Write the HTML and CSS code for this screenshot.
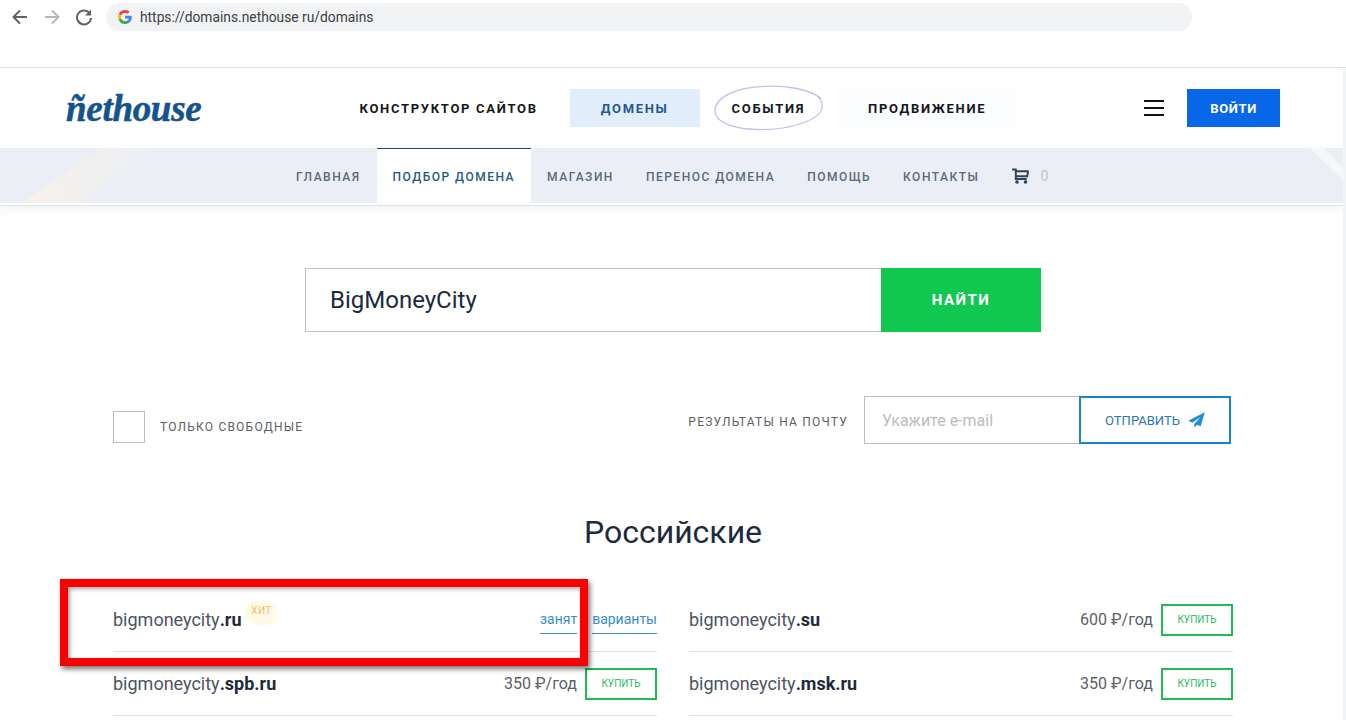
FILE: index.html
```html
<!DOCTYPE html>
<html lang="ru">
<head>
<meta charset="utf-8">
<title>Nethouse Домены</title>
<link rel="stylesheet" href="styles.css">
</head>
<body>
<div class="chrome">
  <svg class="cicon" width="18" height="18" viewBox="0 0 18 18"><path d="M16 9H3M9 2.500 2.500 9 9 15.500" fill="none" stroke="#5f6368" stroke-width="2"/></svg>
  <svg class="cicon" width="18" height="18" viewBox="0 0 18 18"><path d="M2 9h13M9 2.500 15.500 9 9 15.500" fill="none" stroke="#b4b7bb" stroke-width="2"/></svg>
  <svg class="cicon" width="18" height="18" viewBox="0 0 18 18"><path d="M14.600 5.200A7 7 0 1 0 16 10" fill="none" stroke="#5f6368" stroke-width="2"/><path d="M16 1.500v6h-6z" fill="#5f6368"/></svg>
  <div class="omnibox">
    <svg width="14" height="14" viewBox="0 0 48 48"><path fill="#ea4335" d="M24 9.500c3.500 0 6.700 1.200 9.200 3.600l6.900-6.900C35.900 2.400 30.500 0 24 0 14.600 0 6.500 5.400 2.600 13.200l8 6.200C12.400 13.700 17.700 9.500 24 9.500z"/><path fill="#4285f4" d="M47 24.500c0-1.600-.1-3.100-.4-4.500H24v9h13c-.6 3-2.300 5.500-4.800 7.200l7.700 6C44.400 37.900 47 31.800 47 24.500z"/><path fill="#fbbc05" d="M10.500 28.600a14.500 14.500 0 0 1 0-9.200l-8-6.200a24 24 0 0 0 0 21.600z"/><path fill="#34a853" d="M24 48c6.500 0 11.900-2.100 15.900-5.800l-7.700-6c-2.200 1.400-4.900 2.300-8.200 2.300-6.300 0-11.600-4.200-13.500-9.900l-8 6.200C6.500 42.600 14.600 48 24 48z"/></svg>
    <span class="url">https://domains.nethouse ru/domains</span>
  </div>
</div>

<header class="topbar">
  <a class="logo">ñethouse</a>
  <nav class="mainnav">
    <a class="mainlink">КОНСТРУКТОР САЙТОВ</a>
    <a class="mainlink is-current">ДОМЕНЫ</a>
    <a class="mainlink has-ring">СОБЫТИЯ
      <svg class="ring" width="110" height="48" viewBox="0 0 112 48"><path d="M109 13C95 3 72 0 52 1 22 2 1 12 1 26c0 12 20 19 47 19 30 0 60-10 62-22 1-6-3-11-7-14" fill="none" stroke="#c5bfe8" stroke-width="1.300"/></svg>
    </a>
    <a class="mainlink is-pale">ПРОДВИЖЕНИЕ</a>
  </nav>
  <div class="burger"><i></i><i></i><i></i></div>
  <a class="login">ВОЙТИ</a>
</header>

<div class="subnav">
  <svg class="stripes" width="1343" height="55" viewBox="0 0 1343 55">
    <defs><linearGradient id="fade"><stop offset="0" stop-color="#f8f1e8"/><stop offset="1" stop-color="#ebeff5"/></linearGradient></defs>
    <path d="M103 0h47L80 55H22z" fill="url(#fade)"/>
    <path d="M1310 0h14l19 20v12z" fill="#f6f7f9"/>
  </svg>
  <a class="sublink">ГЛАВНАЯ</a>
  <a class="sublink is-active">ПОДБОР ДОМЕНА</a>
  <a class="sublink">МАГАЗИН</a>
  <a class="sublink">ПЕРЕНОС ДОМЕНА</a>
  <a class="sublink">ПОМОЩЬ</a>
  <a class="sublink">КОНТАКТЫ</a>
  <a class="cart">
    <svg width="17" height="16" viewBox="0 0 17 16"><path d="M0 1.500h3.800V11h11M3.800 3.200h12.700M3.800 8.200h11.400l1-5" fill="none" stroke="#2f4358" stroke-width="1.900"/><circle cx="5" cy="14" r="1.800" fill="#2f4358"/><circle cx="13.500" cy="14" r="1.800" fill="#2f4358"/></svg>
    <span class="cartcount">0</span>
  </a>
</div>

<main class="content">
  <form class="search">
    <div class="searchfield">BigMoneyCity</div>
    <div class="searchbtn">НАЙТИ</div>
  </form>

  <div class="filters">
    <label class="onlyfree"><span class="check"></span><span class="caption">ТОЛЬКО СВОБОДНЫЕ</span></label>
    <div class="mailform">
      <span class="caption caption-low">РЕЗУЛЬТАТЫ НА ПОЧТУ</span>
      <div class="mailfield">Укажите e-mail</div>
      <div class="mailbtn">ОТПРАВИТЬ
        <svg width="17" height="16" viewBox="0 0 17 16"><path d="M16.800.200.300 8.800l4 1.900L12.500 5 6.300 12v3.800l2.800-3 3.500 1.500z" fill="#1f8dd6"/></svg>
      </div>
    </div>
  </div>

  <h1 class="zone">Российские</h1>

  <div class="results">
    <div class="row">
      <div class="name">bigmoneycity<b>.ru</b><span class="hit">ХИТ</span></div>
      <div class="status"><a class="statlink">занят</a><a class="statlink">варианты</a></div>
    </div>
    <div class="row">
      <div class="name">bigmoneycity<b>.su</b></div>
      <div class="status"><span class="price">600 ₽/год</span><a class="buy">КУПИТЬ</a></div>
    </div>
    <div class="row">
      <div class="name">bigmoneycity<b>.spb.ru</b></div>
      <div class="status"><span class="price">350 ₽/год</span><a class="buy">КУПИТЬ</a></div>
    </div>
    <div class="row">
      <div class="name">bigmoneycity<b>.msk.ru</b></div>
      <div class="status"><span class="price">350 ₽/год</span><a class="buy">КУПИТЬ</a></div>
    </div>
  </div>
</main>

<div class="scrollstrip"></div>
<div class="redmark"></div>
</body>
</html>
```
FILE: styles.css
```css
* { box-sizing: border-box; }
html, body { margin: 0; height: 720px; overflow: hidden; background: #fff; }
body { font-family: Roboto, "Liberation Sans", sans-serif; color: #1c2b3c; position: relative; }

.chrome { height: 68px; display: flex; align-items: flex-start; padding: 3px 0 0 11px; border-bottom: 1px solid #e2e3e5; }
.cicon { margin: 5px 14px 0 0; }
.cicon:nth-child(3) { margin-right: 13px; }
.omnibox { width: 1086px; height: 28px; border-radius: 14px; background: #f1f3f4; display: flex; align-items: center; padding-left: 12px; gap: 8px; }
.url { font-size: 13.800px; color: #3c4043; }

.topbar { height: 80px; display: flex; align-items: center; padding: 0 66px; }
.logo { width: 263px; font-family: "Liberation Serif", serif; font-style: italic; font-weight: 700; font-size: 37px; letter-spacing: -.3px; color: #14538c; -webkit-text-stroke: .5px #14538c; }
.mainnav { display: flex; gap: 1px; }
.mainlink { position: relative; height: 38px; display: flex; align-items: center; padding: 0 31px; font-size: 13px; font-weight: 700; letter-spacing: 1.700px; color: #14181c; white-space: nowrap; }
.is-current { background: #e2eefb; color: #26598f; }
.is-pale { background: #fcfdfe; }
.ring { position: absolute; left: 13px; top: -4px; }
.burger { margin-left: 127px; width: 20px; display: flex; flex-direction: column; gap: 5px; }
.burger i { display: block; height: 2px; background: #111; }
.login { margin-left: 23px; width: 93px; height: 38px; background: #0767e6; color: #fff; font-size: 13px; font-weight: 700; letter-spacing: .6px; display: flex; align-items: center; justify-content: center; }

.subnav { position: relative; width: 1343px; height: 57px; padding-left: 280px; display: flex; background: #ebeff5; border-bottom: 2px solid #fff; box-shadow: 0 1px 0 #dfe4ea, 0 3px 9px rgba(60, 80, 110, .09); }
.stripes { position: absolute; left: 0; top: 0; }
.sublink { position: relative; padding: 0 16px; height: 57px; display: flex; align-items: center; font-size: 12px; font-weight: 500; letter-spacing: 1.500px; color: #5a6a7c; white-space: nowrap; }
.is-active { background: #fff; color: #28597f; border-top: 1px solid #1a4a70; }
.cart { position: relative; margin-left: 17px; display: flex; align-items: center; gap: 11px; }
.cartcount { font-size: 14px; color: #c0c6cd; }

.content { width: 1120px; margin-left: 113px; padding-top: 63px; }
.search { display: flex; width: 736px; margin-left: 192px; height: 64px; }
.searchfield { flex: 1; border: 1px solid #bcbfc4; border-right: 0; padding-left: 24px; font-size: 24px; line-height: 62px; color: #1c2b3c; }
.searchbtn { width: 160px; background: #10c850; color: #fff; font-size: 15px; font-weight: 700; letter-spacing: 1.500px; display: flex; align-items: center; justify-content: center; }

.filters { margin-top: 64px; display: flex; justify-content: space-between; align-items: flex-end; width: 1118px; }
.onlyfree { display: flex; align-items: center; gap: 15px; margin-bottom: 1px; }
.check { width: 32px; height: 32px; border: 1px solid #b9bcc1; }
.caption { font-size: 12px; letter-spacing: 1.220px; color: #5b6165; white-space: nowrap; }
.caption-low { padding-top: 3px; }
.mailform { display: flex; align-items: center; }
.mailfield { margin-left: 16px; width: 216px; height: 48px; border: 1px solid #b9bcc1; border-right: 0; padding-left: 17px; font-size: 16px; line-height: 47px; color: #b9bdc2; }
.mailbtn { width: 152px; height: 48px; border: 2px solid #1784c7; display: flex; align-items: center; justify-content: center; gap: 8px; font-size: 13px; font-weight: 400; color: #2a76b4; margin-left: -1px; }

.zone { margin: 70px 0 37px; font-size: 32px; font-weight: 400; line-height: 37px; text-align: center; color: #1c2b3c; }

.results { display: grid; grid-template-columns: 544px 544px; column-gap: 32px; }
.row { height: 64px; border-bottom: 1px solid #e3e4e6; display: flex; align-items: center; justify-content: space-between; }
.name { position: relative; font-size: 18px; color: #4b5563; }
.name b { font-weight: 700; color: #1c2b3c; }
.hit { position: absolute; left: 132px; top: -8px; width: 33px; height: 24px; padding-bottom: 5px; border-radius: 12px; background: #fff9e8; color: #efc062; font-size: 10px; letter-spacing: .4px; display: flex; align-items: center; justify-content: center; }
.status { display: flex; align-items: center; gap: 8px; }
.statlink { font-size: 14px; color: #3a8ccb; border-bottom: 1px solid #3a8ccb; line-height: 27px; margin-left: 7px; }
.price { font-size: 16px; color: #5b6165; }
.buy { width: 72px; height: 32px; border: 2px solid #1fbb56; display: flex; align-items: center; justify-content: center; font-size: 10px; font-weight: 400; color: #2bb760; }

.scrollstrip { position: absolute; left: 1343px; top: 68px; width: 3px; height: 652px; background: #f3f4f5; }
.redmark { position: absolute; left: 60px; top: 579px; width: 528px; height: 87px; border: 8px solid #fb0000; box-shadow: 2px 3px 5px rgba(0, 0, 0, .55), inset 2px 2px 4px rgba(0, 0, 0, .35); }
```
